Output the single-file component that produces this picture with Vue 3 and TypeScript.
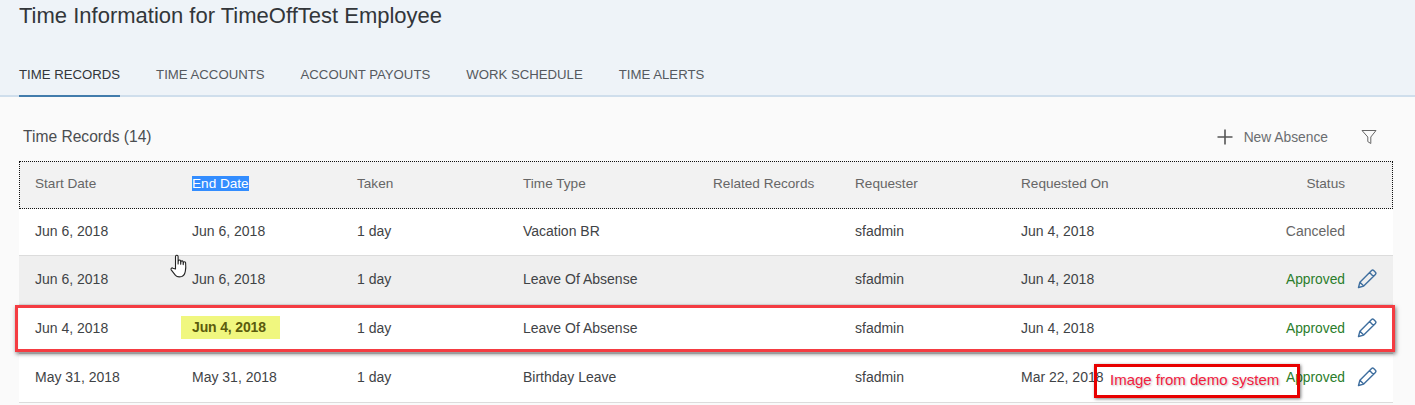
<script setup lang="ts">
type Row = {
  start: string
  end: string
  taken: string
  type: string
  requester: string
  requested: string
  status: string
  editable: boolean
  hovered?: boolean
  marked?: boolean
}

const tabs = ['TIME RECORDS', 'TIME ACCOUNTS', 'ACCOUNT PAYOUTS', 'WORK SCHEDULE', 'TIME ALERTS']

const columns = ['Start Date', 'End Date', 'Taken', 'Time Type', 'Related Records', 'Requester', 'Requested On']

const rows: Row[] = [
  { start: 'Jun 6, 2018', end: 'Jun 6, 2018', taken: '1 day', type: 'Vacation BR', requester: 'sfadmin', requested: 'Jun 4, 2018', status: 'Canceled', editable: false },
  { start: 'Jun 6, 2018', end: 'Jun 6, 2018', taken: '1 day', type: 'Leave Of Absense', requester: 'sfadmin', requested: 'Jun 4, 2018', status: 'Approved', editable: true, hovered: true },
  { start: 'Jun 4, 2018', end: 'Jun 4, 2018', taken: '1 day', type: 'Leave Of Absense', requester: 'sfadmin', requested: 'Jun 4, 2018', status: 'Approved', editable: true, marked: true },
  { start: 'May 31, 2018', end: 'May 31, 2018', taken: '1 day', type: 'Birthday Leave', requester: 'sfadmin', requested: 'Mar 22, 2018', status: 'Approved', editable: true },
]
</script>

<template>
  <div class="page">
    <header class="head">
      <h1 class="title">Time Information for TimeOffTest Employee</h1>
      <nav class="tabs">
        <span v-for="(t, i) in tabs" :key="t" class="tab" :class="{ active: i === 0 }">{{ t }}</span>
      </nav>
    </header>

    <section class="body">
      <div class="toolbar">
        <span class="count">Time Records (14)</span>
        <div class="actions">
          <span class="new">
            <svg width="16" height="16" viewBox="0 0 16 16"><path d="M8 .5v15M.5 8h15" stroke="#555" stroke-width="1.6" fill="none" /></svg>
            New Absence
          </span>
          <svg class="filter" width="16" height="16" viewBox="0 0 16 16">
            <path d="M1 1.500h14L9.800 8v6.500L6.800 12.600V8z" stroke="#666" stroke-width="1" fill="none" stroke-linejoin="round" />
          </svg>
        </div>
      </div>

      <div class="table">
        <div class="row header">
          <span v-for="c in columns" :key="c" class="cell">
            <span :class="{ selected: c === 'End Date' }">{{ c }}</span>
          </span>
          <span class="cell status">Status</span>
          <span class="cell"></span>
        </div>
        <div v-for="(r, i) in rows" :key="i" class="row item" :class="{ hovered: r.hovered }">
          <span class="cell">{{ r.start }}</span>
          <span class="cell">
            <span v-if="r.marked" class="mark">{{ r.end }}</span>
            <template v-else>{{ r.end }}</template>
          </span>
          <span class="cell">{{ r.taken }}</span>
          <span class="cell">{{ r.type }}</span>
          <span class="cell"></span>
          <span class="cell">{{ r.requester }}</span>
          <span class="cell">{{ r.requested }}</span>
          <span class="cell status" :class="{ ok: r.status === 'Approved' }">{{ r.status }}</span>
          <span class="cell edit">
            <svg v-if="r.editable" width="20" height="20" viewBox="0 0 20 20">
              <path d="M1.500 18.500l1.400-5.200L14.600 1.600a1.500 1.500 0 0 1 2.100 0l1.700 1.700a1.500 1.500 0 0 1 0 2.100L6.700 17.100zM2.900 13.300l3.800 3.800M12.600 3.600l3.800 3.800" stroke="#3f6f9f" stroke-width="1.400" fill="none" stroke-linejoin="round" />
            </svg>
          </span>
        </div>
      </div>
    </section>

    <svg class="hand" width="20" height="26" viewBox="0 0 18 26">
      <path d="M5.500 15V2.600a1.300 1.300 0 0 1 2.600 0V10l.2-3.200a1.200 1.200 0 0 1 2.300 0l.1 3.400.2-2.600a1.200 1.200 0 0 1 2.200 0l.1 3 .2-1.800a1.100 1.100 0 0 1 2.200 0c.3 3 .3 6-.3 8.600-.5 2.600-2 4.600-3.500 5.100-2.500.7-5 .3-6.300-1.100L1.200 15.800c-.8-1.100.6-2.400 1.700-1.600z" fill="#fff" stroke="#222" stroke-width="1.100" stroke-linejoin="round" />
    </svg>
    <div class="red-box"></div>
    <div class="demo-note">Image from demo system</div>
  </div>
</template>

<style>
html,
body {
  margin: 0;
  background: #fafafa;
  overflow: hidden;
}
</style>

<style scoped>
.page {
  position: relative;
  width: 1415px;
  height: 405px;
  overflow: hidden;
  background: #fafafa;
  font-family: 'Liberation Sans', Arial, sans-serif;
  color: #333;
}

.head {
  height: 95px;
  padding: 0 19px;
  background: #eef3f8;
  border-bottom: 2px solid #cfdeec;
  display: flex;
  flex-direction: column;
}

.title {
  margin: 0;
  padding-top: 3px;
  font-size: 22px;
  line-height: 26px;
  font-weight: 400;
  color: #32363a;
}

.tabs {
  display: flex;
  gap: 36px;
  margin-top: auto;
}

.tab {
  height: 47px;
  box-sizing: border-box;
  padding-top: 18px;
  font-size: 13.200px;
  line-height: 18px;
  color: #55595e;
}

.tab.active {
  color: #32363a;
  border-bottom: 2px solid #427cac;
  margin-bottom: -2px;
  height: 49px;
}

.body {
  padding: 0 22px 0 19px;
}

.toolbar {
  height: 64px;
  padding: 16px 16px 0 4px;
  box-sizing: border-box;
  display: flex;
  align-items: center;
  justify-content: space-between;
}

.count {
  font-size: 15.600px;
  color: #4a4d50;
}

.actions {
  display: flex;
  align-items: center;
  gap: 33px;
  font-size: 13.800px;
  color: #6a6d70;
}

.new {
  display: flex;
  align-items: center;
  gap: 11px;
}

.row {
  display: grid;
  grid-template-columns: 157px 165px 166px 190px 142px 166px 252px 72px 52px;
  align-items: center;
  padding-left: 16px;
  font-size: 14px;
}

.header {
  height: 48px;
  box-sizing: border-box;
  background: #f2f2f2;
  border: 1px dotted #111;
  padding-left: 15px;
  padding-bottom: 3px;
  font-size: 13.600px;
  color: #666;
}

.item {
  height: 49px;
  box-sizing: border-box;
  padding-bottom: 3px;
  background: #fff;
  border-bottom: 1px solid #dcdcdc;
  color: #3f4346;
}

.header + .item {
  height: 47px;
  padding-bottom: 2px;
}

.item.hovered {
  background: #efefef;
}

.selected {
  background: #338dff;
  color: #fff;
}

.mark {
  background: #f0f77f;
  color: #5b5c0d;
  font-weight: 700;
  display: inline-block;
  margin-left: -11px;
  width: 99px;
  box-sizing: border-box;
  padding-left: 11px;
  line-height: 23px;
  letter-spacing: -0.15px;
}

.status {
  text-align: right;
  color: #666;
}

.status.ok {
  color: #2b7d2b;
  font-size: 13.800px;
  padding-top: 2px;
}

.edit {
  display: flex;
  padding-left: 12px;
}

.hand {
  position: absolute;
  left: 169px;
  top: 254px;
}

.red-box {
  position: absolute;
  left: 15px;
  top: 305px;
  width: 1380px;
  height: 47px;
  box-sizing: border-box;
  border: 3px solid #f43c42;
  box-shadow: 1px 2px 4px rgba(0, 0, 0, 0.5);
}

.demo-note {
  position: absolute;
  left: 1094px;
  top: 364px;
  width: 206px;
  height: 34px;
  box-sizing: border-box;
  border: 3px solid #e80000;
  box-shadow: 1px 1px 3px rgba(0, 0, 0, 0.5);
  font-size: 15px;
  line-height: 26px;
  padding-left: 13px;
  color: #f2203f;
  text-shadow: 1px 1px 2px rgba(0, 0, 0, 0.25);
}
</style>
